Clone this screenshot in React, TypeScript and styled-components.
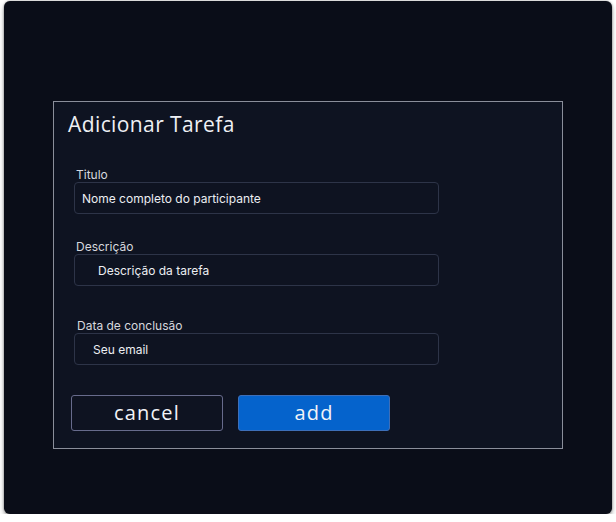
import React from "react";
import styled, { createGlobalStyle } from "styled-components";

const Global = createGlobalStyle`
  html, body { margin: 0; padding: 0; background: #ffffff; }
  * { box-sizing: border-box; }
`;

const Card = styled.div`
  margin: 1px 0 0 4px;
  width: 608px;
  height: 513px;
  background: #0a0d18;
  border-radius: 6px;
  box-shadow: 0 3px 5px rgba(0, 0, 0, 0.35), 0 0 2px rgba(0, 0, 0, 0.45);
  padding: 100px 0 0 49px;
`;

const Panel = styled.form`
  width: 510px;
  background: #0e1321;
  border: 1px solid #8a8e9a;
  padding: 8px 0 17px 14px;
  display: flex;
  flex-direction: column;
`;

const Title = styled.h2`
  margin: 0;
  font-family: "Open Sans", "Noto Sans", sans-serif;
  font-weight: 400;
  font-size: 21px;
  line-height: 28px;
  letter-spacing: 0.4px;
  color: #eef0f4;
`;

const Field = styled.div<{ $top: number; $labelShift: number }>`
  margin: ${(p) => p.$top}px 0 0 6px;
  width: 365px;
  display: flex;
  flex-direction: column;

  & > label {
    padding-left: ${(p) => p.$labelShift}px;
  }
`;

const Label = styled.label`
  font-family: Inter, "Liberation Sans", sans-serif;
  font-size: 12px;
  line-height: 15px;
  color: #d6d8de;
`;

const Input = styled.input<{ $pad: number }>`
  height: 32px;
  width: 100%;
  background: #0e1321;
  border: 1px solid #2d3448;
  border-radius: 4px;
  padding: 0 8px 0 ${(p) => p.$pad}px;
  font-family: Inter, "Liberation Sans", sans-serif;
  font-size: 12px;
  color: #eceef2;
  outline: none;

  &::placeholder {
    color: #eceef2;
    opacity: 1;
  }
`;

const Actions = styled.div`
  margin: 30px 0 0 3px;
  display: flex;
  gap: 15px;
`;

const Button = styled.button<{ $primary?: boolean }>`
  width: 152px;
  height: 36px;
  border-radius: 3px;
  border: 1px solid ${(p) => (p.$primary ? "#3e6fb8" : "#676b8c")};
  background: ${(p) => (p.$primary ? "#0563cc" : "#0e1321")};
  color: #f2f4f8;
  font-family: "Open Sans", "Noto Sans", sans-serif;
  font-size: 20px;
  letter-spacing: 1.2px;
  line-height: 1;
  padding: 0;
  cursor: pointer;
`;

export default function App() {
  return (
    <>
      <Global />
      <Card>
        <Panel onSubmit={(e) => e.preventDefault()}>
          <Title>Adicionar Tarefa</Title>
          <Field $top={29} $labelShift={2}>
            <Label>Titulo</Label>
            <Input $pad={7} placeholder="Nome completo do participante" />
          </Field>
          <Field $top={25} $labelShift={2}>
            <Label>Descrição</Label>
            <Input $pad={23} placeholder="Descrição da tarefa" />
          </Field>
          <Field $top={32} $labelShift={3}>
            <Label>Data de conclusão</Label>
            <Input $pad={18} placeholder="Seu email" />
          </Field>
          <Actions>
            <Button type="button">cancel</Button>
            <Button type="submit" $primary>
              add
            </Button>
          </Actions>
        </Panel>
      </Card>
    </>
  );
}
